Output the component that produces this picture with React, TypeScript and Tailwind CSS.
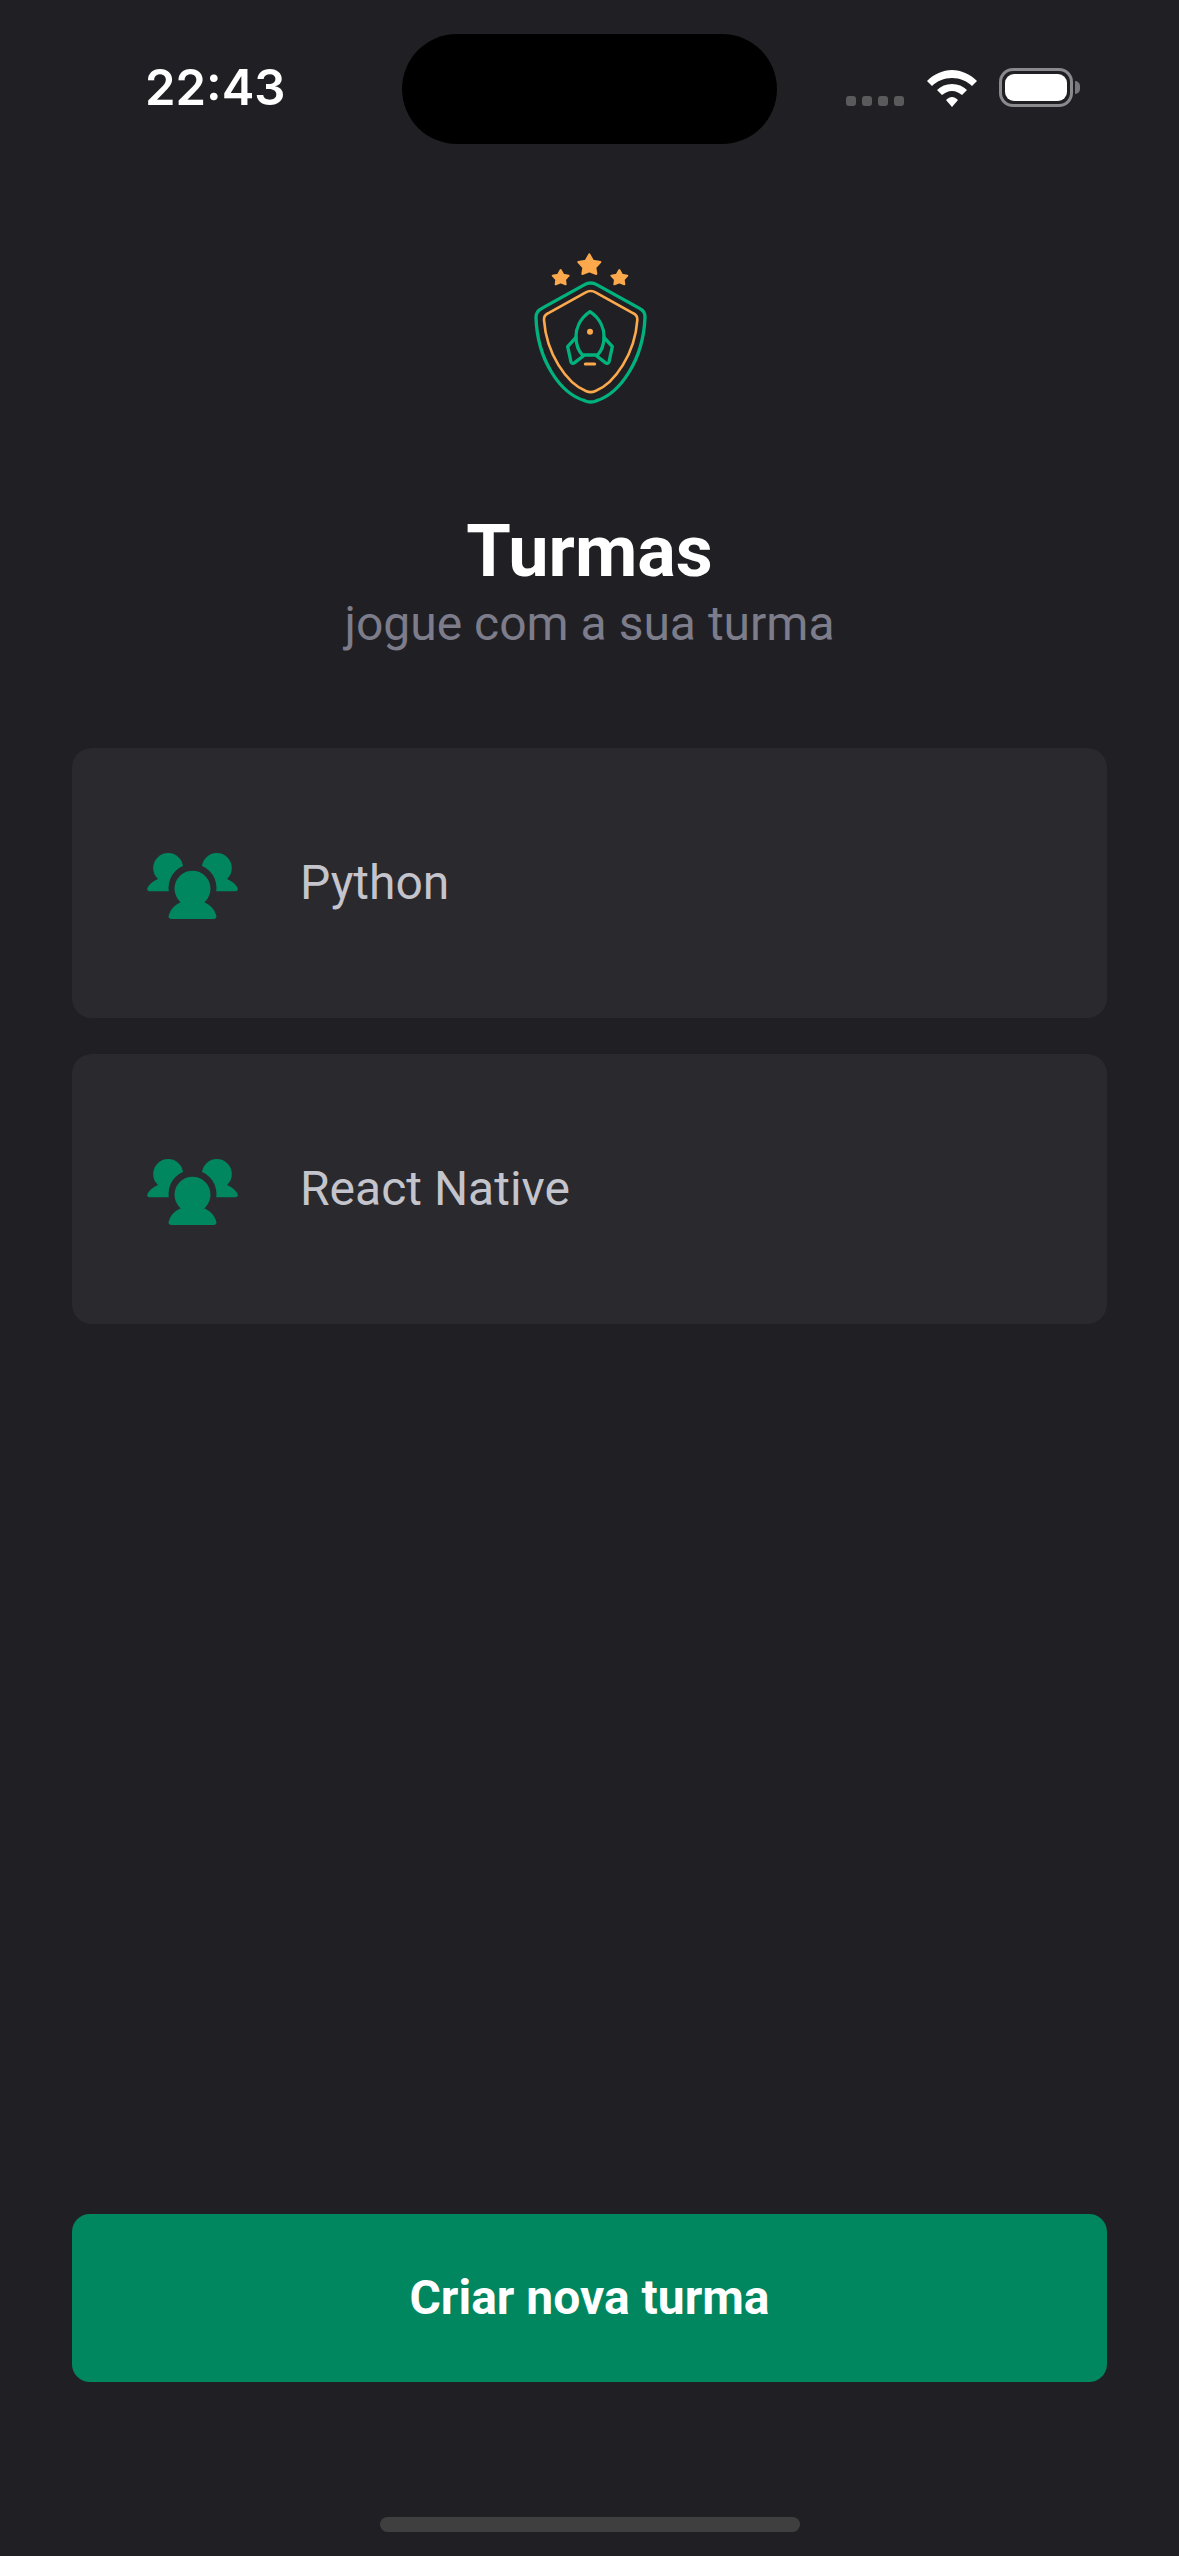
const groups = ['Python', 'React Native'];

const GroupIcon = () => (
  <svg viewBox="80 70 272 198" className="w-[91px] h-[66px] mt-[6px] shrink-0" fill="#00875F">
    <circle cx="143" cy="115" r="45" />
    <circle cx="289" cy="115" r="45" />
    <path d="M90 185 Q76 185 82 172 Q92 156 118 146 L150 146 L150 185 Z" />
    <path d="M342 185 Q356 185 350 172 Q340 156 314 146 L282 146 L282 185 Z" />
    <circle cx="216" cy="175" r="72" fill="#29292E" />
    <circle cx="216" cy="177" r="54" />
    <path d="M154 268 Q141 268 145 256 Q152 232 180 218 L252 218 Q280 232 287 256 Q291 268 278 268 Z" />
  </svg>
);

const Logo = () => (
  <svg viewBox="0 0 540 570" className="w-[180px] h-[190px]" fill="none" strokeLinecap="round" strokeLinejoin="round">
    <g fill="#FBA94C" stroke="#FBA94C" strokeWidth="6">
      <path d="M268 73 L279 92 L301 96 L286 113 L289 132 L268 124 L247 132 L250 113 L235 96 L257 92 Z" />
      <path d="M182 120 L190 134 L206 137 L195 149 L197 163 L182 157 L167 163 L169 149 L158 137 L174 134 Z" />
      <path d="M358 120 L366 134 L382 137 L371 149 L373 163 L358 157 L343 163 L345 149 L334 137 L350 134 Z" />
    </g>
    <path
      d="M272 159 Q282 159 290 164 L420 236 Q436 244 435 262 C430 390 360 490 290 512 Q272 520 254 512 C180 490 112 390 108 262 Q108 244 124 236 L254 164 Q262 159 272 159 Z"
      stroke="#00B37E"
      strokeWidth="10"
    />
    <path
      d="M272 183 Q280 183 288 188 L400 250 Q413 256 412 270 C405 370 345 460 285 484 Q272 489 259 484 C199 460 139 370 132 270 Q131 256 144 250 L256 188 Q264 183 272 183 Z"
      stroke="#FBA94C"
      strokeWidth="8"
    />
    <g stroke="#00B37E" strokeWidth="10">
      <path d="M270 245 C240 265 228 295 228 320 C228 345 238 365 247 375 L293 375 C302 365 312 345 312 320 C312 295 300 265 270 245 Z" />
      <path d="M228 322 L203 350 L213 396 Q217 403 224 398 L250 378" />
      <path d="M312 322 L337 350 L327 396 Q323 403 316 398 L290 378" />
    </g>
    <circle cx="270" cy="305" r="9" fill="#FBA94C" />
    <path d="M256 402 L284 402" stroke="#FBA94C" strokeWidth="9" />
  </svg>
);

const StatusIcons = () => (
  <div className="flex items-end">
    <div className="flex gap-[6px] pb-[1px]">
      {[0, 1, 2, 3].map((i) => (
        <div key={i} className="w-[10px] h-[10px] rounded-[3px] bg-[#5a5a5d]" />
      ))}
    </div>
    <svg viewBox="0 0 50 37" className="w-[50px] h-[37px] ml-[23px]" fill="#fff">
      <path d="M25 0 C34 0 43 4 50 11 L45 16 C40 11 33 8 25 8 C17 8 10 11 5 16 L0 11 C7 4 16 0 25 0 Z" />
      <path d="M25 14 C31 14 36 16 40 20 L35 25 C32 23 29 21 25 21 C21 21 18 23 15 25 L10 20 C14 16 19 14 25 14 Z" />
      <path d="M25 27 C27 27 29 28 31 30 L25 37 L19 30 C21 28 23 27 25 27 Z" />
    </svg>
    <div className="flex items-center ml-[22px]">
      <div className="w-[74px] h-[39px] rounded-[14px] border-[3px] border-[#8a8a8d] p-[3px]">
        <div className="w-full h-full rounded-[9px] bg-white" />
      </div>
      <div className="w-[5px] h-[13px] ml-[2px] rounded-r-full bg-[#77777a]" />
    </div>
  </div>
);

export default function App() {
  return (
    <div className="w-[1179px] h-[2556px] flex flex-col bg-[#202024] font-['Roboto',sans-serif] overflow-hidden">
      {/* Status bar */}
      <div className="h-[144px] pt-[34px] flex items-start shrink-0">
        <div className="w-[402px] pl-[145px] pt-[24px] text-[49px] leading-[60px] font-semibold text-white font-['Inter',sans-serif]">
          22:43
        </div>
        <div className="w-[375px] h-[110px] rounded-[55px] bg-black" />
        <div className="pl-[69px] pt-[34px]">
          <StatusIcons />
        </div>
      </div>

      {/* Header */}
      <div className="mt-[86px] flex flex-col items-center shrink-0">
        <Logo />
        <h1 className="mt-[89px] text-[72px] leading-[86px] font-bold text-white">Turmas</h1>
        <p className="text-[48px] leading-[58px] text-[#7C7C8A]">jogue com a sua turma</p>
      </div>

      {/* Group list */}
      <div className="mt-[95px] px-[72px] flex flex-col gap-[36px]">
        {groups.map((name) => (
          <div key={name} className="h-[270px] rounded-[20px] bg-[#29292E] flex items-center pl-[75px] gap-[62px]">
            <GroupIcon />
            <span className="text-[48px] text-[#C4C4CC]">{name}</span>
          </div>
        ))}
      </div>

      <div className="mt-auto px-[72px]">
        <button className="w-full h-[168px] rounded-[18px] bg-[#00875F] text-[48px] font-bold text-white">
          Criar nova turma
        </button>
      </div>

      {/* Home indicator */}
      <div className="mt-[135px] mb-[24px] self-center w-[420px] h-[15px] rounded-full bg-[#3f3f3f]" />
    </div>
  );
}
